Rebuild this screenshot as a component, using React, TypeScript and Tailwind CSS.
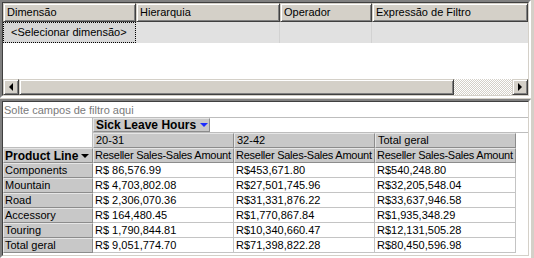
import React from 'react';

const raised =
  'border border-t-[#d4d0c8] border-l-[#d4d0c8] border-r-[#404040] border-b-[#404040] shadow-[inset_1px_1px_#ffffff,inset_-1px_-1px_#808080] bg-[#d4d0c8]';

const gridCols = [
  { label: 'Dimensão', w: 'w-[133px]' },
  { label: 'Hierarquia', w: 'w-[144px]' },
  { label: 'Operador', w: 'w-[92px]' },
  { label: 'Expressão de Filtro', w: 'flex-1' },
];

const rows = [
  ['Components', 'R$ 86,576.99', 'R$453,671.80', 'R$540,248.80'],
  ['Mountain', 'R$ 4,703,802.08', 'R$27,501,745.96', 'R$32,205,548.04'],
  ['Road', 'R$ 2,306,070.36', 'R$31,331,876.22', 'R$33,637,946.58'],
  ['Accessory', 'R$ 164,480.45', 'R$1,770,867.84', 'R$1,935,348.29'],
  ['Touring', 'R$ 1,790,844.81', 'R$10,340,660.47', 'R$12,131,505.28'],
  ['Total geral', 'R$ 9,051,774.70', 'R$71,398,822.28', 'R$80,450,596.98'],
];

const Arrow = ({ dir, color = '#000' }: { dir: 'left' | 'right' | 'down'; color?: string }) => {
  const pts = dir === 'left' ? '4,0 4,8 0,4' : dir === 'right' ? '0,0 0,8 4,4' : '0,0 8,0 4,4';
  const w = dir === 'down' ? 8 : 4;
  const h = dir === 'down' ? 4 : 8;
  return (
    <svg width={w} height={h} viewBox={`0 0 ${w} ${h}`} className="block shrink-0">
      <polygon points={pts} fill={color} />
    </svg>
  );
};

const grayCell =
  'bg-[#c8c8c8] border-r border-b border-r-[#8c8c8c] border-b-[#8c8c8c] border-l border-t border-l-[#e6e6e6] border-t-[#e6e6e6]';

export default function App() {
  return (
    <div className="w-[534px] h-[258px] bg-[#d4d0c8] flex flex-col font-['Liberation_Sans',Arial,sans-serif] text-[11px] leading-none text-black overflow-hidden">
      {/* filter grid */}
      <div className="h-[98px] w-[531px] flex flex-col border-2 border-t-[#808080] border-l-[#808080] border-r-white border-b-white">
        <div className="flex-1 flex flex-col bg-white border border-t-[#404040] border-l-[#404040] border-r-[#d4d0c8] border-b-[#d4d0c8]">
          <div className="flex h-[19px]">
            {gridCols.map((c) => (
              <div key={c.label} className={`${c.w} ${raised} flex items-center px-[3px]`}>
                {c.label}
              </div>
            ))}
          </div>
          <div className="flex h-[21px] bg-[#e1e1e1]">
            <div className="w-[133px] border border-dotted border-black bg-[#d6d6d6] flex items-center px-[7px]">
              &lt;Selecionar dimensão&gt;
            </div>
            <div className="w-[144px] border-r border-[#d2d2d2]" />
            <div className="w-[92px] border-r border-[#d2d2d2]" />
            <div className="flex-1" />
          </div>
          <div className="flex-1" />
          <div className="h-[16px] flex bg-[#d4d0c8]">
            <div className={`w-[16px] ${raised} flex items-center justify-center`}>
              <Arrow dir="left" />
            </div>
            <div className={`w-[435px] ${raised}`} />
            <div className="flex-1 bg-[repeating-conic-gradient(#ffffff_0_25%,#d4d0c8_0_50%)] bg-[length:2px_2px]" />
            <div className={`w-[16px] ${raised} flex items-center justify-center`}>
              <Arrow dir="right" />
            </div>
          </div>
        </div>
      </div>

      {/* pivot area */}
      <div className="mt-[1px] flex-1 w-[531px] flex flex-col border-2 border-t-[#808080] border-l-[#808080] border-r-white border-b-white">
        <div className="flex-1 flex flex-col bg-white border border-t-[#404040] border-l-[#404040] border-r-[#d4d0c8] border-b-[#d4d0c8]">
          <div className="h-[16px] flex items-center px-[1px] pt-[1px] text-[#7a7a7a] border-b border-[#bdbdbd]">
            Solte campos de filtro aqui
          </div>
          <div className="flex">
            <div className="w-[90px] h-[30px] border-r border-b border-[#bdbdbd]" />
            <div className="flex-1 flex flex-col">
              <div className="h-[15px] flex border-b border-[#bdbdbd]">
                <div className={`w-[117px] ${grayCell} flex items-center px-[2px] gap-[4px] font-bold text-[12px] whitespace-nowrap`}>
                  Sick Leave Hours
                  <Arrow dir="down" color="#1b2cff" />
                </div>
              </div>
              <div className="h-[15px] flex">
                {['20-31', '32-42', 'Total geral'].map((t) => (
                  <div key={t} className={`w-[141px] ${grayCell} flex items-center px-[2px]`}>
                    {t}
                  </div>
                ))}
              </div>
            </div>
          </div>
          <div className="h-[15px] flex">
            <div className={`w-[90px] ${grayCell} flex items-center justify-between px-[1px] pr-[3px] font-bold text-[12px] whitespace-nowrap`}>
              Product Line
              <Arrow dir="down" />
            </div>
            {[0, 1, 2].map((i) => (
              <div key={i} className={`w-[141px] ${grayCell} flex items-center px-[1px] whitespace-nowrap overflow-hidden tracking-[-0.25px]`}>
                Reseller Sales-Sales Amount
              </div>
            ))}
          </div>
          {rows.map((r) => (
            <div key={r[0]} className="h-[15px] flex">
              <div className={`w-[90px] ${grayCell} flex items-center px-[1px]`}>{r[0]}</div>
              {r.slice(1).map((v, i) => (
                <div key={i} className="w-[141px] border-r border-b border-[#c4c4c4] flex items-center px-[2px]">
                  {v}
                </div>
              ))}
            </div>
          ))}
        </div>
      </div>
    </div>
  );
}
